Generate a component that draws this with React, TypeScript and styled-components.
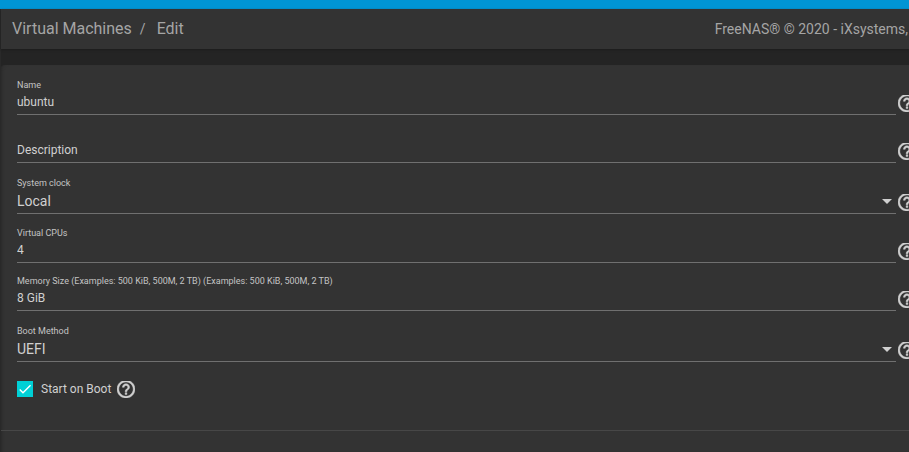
import React, { useId, useState } from "react";
import styled, { createGlobalStyle } from "styled-components";

const GlobalStyle = createGlobalStyle`
  * { box-sizing: border-box; }
  body {
    margin: 0;
    background: #242424;
    color: #d0d0d0;
    font-family: Roboto, "Liberation Sans", sans-serif;
    overflow: hidden;
  }
`;

const Page = styled.div`
  display: flex;
  flex-direction: column;
  min-height: 100vh;
  overflow: hidden;
`;

const AccentBar = styled.div`
  height: 9px;
  background: #0095d5;
`;

const Content = styled.div`
  display: flex;
  flex: 1;
  flex-direction: column;
  gap: 16px;
  border-left: 1px solid #292929;
`;

const TopBar = styled.header`
  display: flex;
  align-items: center;
  justify-content: space-between;
  height: 40px;
  padding: 0 1px 0 11px;
  background: #333333;
  color: #a5a5a5;
  box-shadow: 0 1px 2px #1c1c1c;
  white-space: nowrap;
`;

const Breadcrumb = styled.nav`
  display: flex;
  align-items: center;
  gap: 8px;
  font-size: 16px;
  line-height: 20px;
`;

const Crumb = styled.a`
  color: inherit;
  text-decoration: none;
`;

const Separator = styled.span`
  padding-right: 3px;
  font-size: 14px;
`;

const Copyright = styled.span`
  font-size: 14px;
  line-height: 20px;
`;

const Card = styled.main`
  display: flex;
  flex: 1;
  flex-direction: column;
  border-radius: 4px 0 0 0;
  background: #333333;
  box-shadow: inset 3px 0 3px -2px #292929;
`;

const Form = styled.form`
  display: flex;
  flex-direction: column;
  margin-right: -7px;
  padding: 2px 0 32px 16px;
`;

const Row = styled.div`
  display: flex;
  align-items: flex-end;
  gap: 2px;
`;

const Field = styled.div<{ $height: number }>`
  display: flex;
  flex: 1;
  flex-direction: column;
  justify-content: flex-end;
  height: ${(p) => p.$height}px;
  border-bottom: 1px solid #707070;
`;

const Label = styled.label`
  color: #c4c4c4;
  font-size: 9px;
  line-height: 12px;
`;

const Input = styled.input`
  width: 100%;
  height: 23px;
  padding: 0 0 2px;
  border: 0;
  outline: 0;
  background: transparent;
  color: #d0d0d0;
  font: 12px/20px Roboto, "Liberation Sans", sans-serif;

  &::placeholder {
    color: #d0d0d0;
    opacity: 1;
  }
`;

const SelectBox = styled.div`
  display: flex;
  align-items: center;
  height: 24px;
`;

const Select = styled.select`
  flex: 1;
  height: 24px;
  margin-right: -14px;
  padding: 0 14px 0 0;
  border: 0;
  outline: 0;
  appearance: none;
  background: transparent;
  color: #d0d0d0;
  font: 14px/24px Roboto, "Liberation Sans", sans-serif;

  option { background: #333333; }
`;

const Arrow = styled.svg`
  width: 10px;
  height: 5px;
  margin-right: 4px;
  fill: #d0d0d0;
  pointer-events: none;
`;

const HelpButton = styled.button<{ $inline?: boolean }>`
  display: flex;
  flex: none;
  margin-bottom: ${(p) => (p.$inline ? 0 : 3)}px;
  padding: 0;
  border: 0;
  background: none;
  color: #d0d0d0;

  svg {
    width: 18px;
    height: 17px;
    fill: currentColor;
    stroke: currentColor;
    stroke-width: 0.5;
  }
`;

const CheckRow = styled.div`
  display: flex;
  align-items: center;
  gap: 6px;
  padding-top: 18px;
`;

const CheckLabel = styled.label`
  display: flex;
  align-items: center;
  gap: 8px;
  font-size: 12px;
  line-height: 18px;
`;

const CheckBox = styled.span`
  display: grid;
  width: 16px;
  height: 16px;

  > * { grid-area: 1 / 1; }
`;

const CheckInput = styled.input`
  width: 16px;
  height: 16px;
  margin: 0;
  appearance: none;
  border: 2px solid #cccccc;

  &:checked {
    border-color: #00d0d6;
    background: #00d0d6;
  }
`;

const Tick = styled.svg`
  width: 16px;
  height: 16px;
  fill: none;
  stroke: #ffffff;
  stroke-width: 2.1;
  pointer-events: none;
`;

const Divider = styled.hr`
  width: 100%;
  margin: 0;
  border: 0;
  border-top: 1px solid #474747;
`;

function Help({ topic, inline }: { topic: string; inline?: boolean }) {
  return (
    <HelpButton type="button" aria-label={`Help: ${topic}`} $inline={inline}>
      <svg viewBox="2 3 20 18.9" aria-hidden="true">
        <path d="M11 18h2v-2h-2v2zm1-16C6.48 2 2 6.48 2 12s4.48 10 10 10 10-4.48 10-10S17.52 2 12 2zm0 18c-4.41 0-8-3.59-8-8s3.59-8 8-8 8 3.59 8 8-3.59 8-8 8zm0-14c-2.21 0-4 1.79-4 4h2c0-1.1.9-2 2-2s2 .9 2 2c0 2-3 1.75-3 5h2c0-2.25 3-2.5 3-5 0-2.21-1.79-4-4-4z" />
      </svg>
    </HelpButton>
  );
}

function TextField({ label, value, height = 48 }: { label: string; value: string; height?: number }) {
  const id = useId();
  return (
    <Row>
      <Field $height={height}>
        <Label htmlFor={id}>{label}</Label>
        <Input id={id} defaultValue={value} />
      </Field>
      <Help topic={label} />
    </Row>
  );
}

function EmptyField({ label }: { label: string }) {
  return (
    <Row>
      <Field $height={48}>
        <Input aria-label={label} placeholder={label} />
      </Field>
      <Help topic={label} />
    </Row>
  );
}

function SelectField({ label, options }: { label: string; options: string[] }) {
  const id = useId();
  return (
    <Row>
      <Field $height={51}>
        <Label htmlFor={id}>{label}</Label>
        <SelectBox>
          <Select id={id}>
            {options.map((o) => (
              <option key={o}>{o}</option>
            ))}
          </Select>
          <Arrow viewBox="0 0 10 5" aria-hidden="true">
            <path d="M0 0h10L5 5z" />
          </Arrow>
        </SelectBox>
      </Field>
      <Help topic={label} />
    </Row>
  );
}

export default function App() {
  const [startOnBoot, setStartOnBoot] = useState(true);
  return (
    <Page>
      <GlobalStyle />
      <AccentBar />
      <Content>
        <TopBar>
          <Breadcrumb aria-label="Breadcrumb">
            <Crumb href="#vm">Virtual Machines</Crumb>
            <Separator>/</Separator>
            <Crumb href="#edit">Edit</Crumb>
          </Breadcrumb>
          <Copyright>FreeNAS® © 2020 - iXsystems,</Copyright>
        </TopBar>
        <Card>
          <Form>
            <TextField label="Name" value="ubuntu" />
            <EmptyField label="Description" />
            <SelectField label="System clock" options={["Local"]} />
            <TextField label="Virtual CPUs" value="4" height={49} />
            <TextField
              label="Memory Size (Examples: 500 KiB, 500M, 2 TB) (Examples: 500 KiB, 500M, 2 TB)"
              value="8 GiB"
            />
            <SelectField label="Boot Method" options={["UEFI"]} />
            <CheckRow>
              <CheckLabel>
                <CheckBox>
                  <CheckInput
                    type="checkbox"
                    checked={startOnBoot}
                    onChange={(e) => setStartOnBoot(e.target.checked)}
                  />
                  {startOnBoot && (
                    <Tick viewBox="0 0 24 24" aria-hidden="true">
                      <path d="M4.1 12.7 9 17.6 20.3 6.3" />
                    </Tick>
                  )}
                </CheckBox>
                Start on Boot
              </CheckLabel>
              <Help topic="Start on Boot" inline />
            </CheckRow>
          </Form>
          <Divider />
        </Card>
      </Content>
    </Page>
  );
}
